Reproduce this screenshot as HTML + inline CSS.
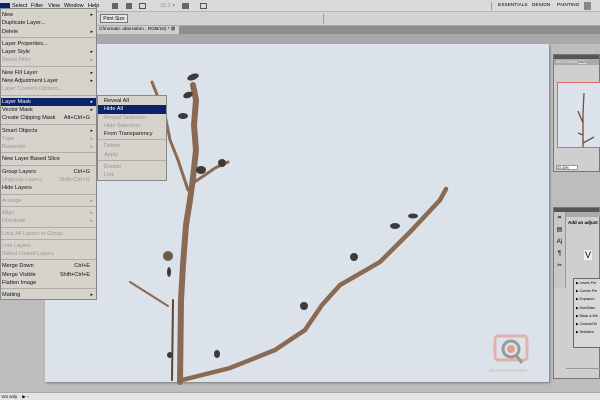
<!DOCTYPE html>
<html><head><style>
*{margin:0;padding:0;box-sizing:border-box}
body{width:600px;height:400px;overflow:hidden;background:#bdbdbd;font-family:"Liberation Sans",sans-serif;position:relative}
.abs{position:absolute}
.menu{left:0;top:8px;width:97px;height:292px;background:#d6d3cc;border:1px solid #888;font-size:5.6px;color:#111;padding-top:2px}
.menu div,.sub div{height:8.3px;line-height:8.3px;padding-left:1px;position:relative;white-space:nowrap}
.menu div.sep,.sub div.sep{height:4px;border-top:1px solid #b0ada6;margin-top:1px;line-height:0;height:3px}
.dis{color:#9a9893}
.sel{background:#0a246a;color:#fff}
.ar::after{content:"▸";position:absolute;right:3px;font-size:5px}
.sc{position:absolute;right:6px}
.sub{left:97px;top:95px;width:70px;height:86px;background:#d6d3cc;border:1px solid #888;font-size:5.6px;color:#111;padding-top:1px}
.sub div{padding-left:6px}
</style></head><body>
<div class="abs" style="left:0;top:0;width:600px;height:12px;background:#dadada;border-bottom:1px solid #b5b5b5;font-size:5.5px;line-height:12px">
<span class="abs" style="left:0;top:3px;width:10px;height:6px;background:#0a246a"></span>
<span class="abs" style="left:12px">Select</span><span class="abs" style="left:31px">Filter</span><span class="abs" style="left:48px">View</span><span class="abs" style="left:64px">Window</span><span class="abs" style="left:88px">Help</span>
<span class="abs" style="left:112px;top:3px;width:6px;height:6px;background:#666"></span>
<span class="abs" style="left:126px;top:3px;width:6px;height:6px;background:#666"></span>
<span class="abs" style="left:139px;top:3px;width:7px;height:6px;border:1px solid #555"></span>
<span class="abs" style="left:160px;color:#999">33.3 ▾</span>
<span class="abs" style="left:182px;top:3px;width:7px;height:6px;background:#666"></span>
<span class="abs" style="left:200px;top:3px;width:7px;height:6px;border:1px solid #555"></span>
<span class="abs" style="left:491px;top:2px;width:1px;height:8px;background:#999"></span>
<span class="abs" style="left:498px;font-size:4.8px">ESSENTIALS</span><span class="abs" style="left:532px;font-size:4.8px">DESIGN</span><span class="abs" style="left:557px;font-size:4.8px">PAINTING</span>
<span class="abs" style="left:584px;top:2px;width:7px;height:8px;background:#888"></span>
</div>
<div class="abs" style="left:0;top:12px;width:600px;height:14px;background:#d3d3d3;border-bottom:1px solid #aaa"></div>
<div class="abs" style="left:100px;top:14px;width:28px;height:9px;border:1px solid #777;background:#e6e6e6;font-size:5px;text-align:center;line-height:8px">Print Size</div>
<div class="abs" style="left:323px;top:14px;width:1px;height:10px;background:#999"></div>
<div class="abs" style="left:0;top:26px;width:600px;height:8px;background:#8e8e8e"></div>
<div class="abs" style="left:97px;top:26px;width:82px;height:8px;background:#cfcfcf;font-size:4.8px;line-height:8px;padding-left:2px">Chromatic aberration , RGB/16) * ⊠</div>
<div class="abs" style="left:0;top:34px;width:600px;height:10px;background:#a9a9a9"></div>
<div class="abs" style="left:45px;top:44px;width:504px;height:338px;background:#dce2ea;box-shadow:1px 1px 2px #777"></div>
<svg class="abs" style="left:0;top:0" width="600" height="400" viewBox="0 0 600 400">
<g stroke="#8a6a52" fill="none" stroke-linecap="round">
<path d="M180 382 L181 300 L183 265 L186 225 L190 200 L193 178 L196 150 L194 125 L196 100 L193 85" stroke-width="6"/>
<path d="M188 190 L178 160 L170 140 L165 115 L152 82" stroke-width="3"/>
<path d="M193 183 L205 175 L215 168 L228 162" stroke-width="3"/>
<path d="M182 380 L230 368 L275 350 L305 330 L322 305 L340 285 L380 262 L410 232 L440 200 L446 189" stroke-width="4.5"/>
<path d="M130 282 L168 306" stroke-width="2"/>
<path d="M173 300 L172 380" stroke-width="2" stroke="#5d4636"/>
</g>
<g fill="#3e3a3a">
<ellipse cx="193" cy="77" rx="6" ry="3" transform="rotate(-20 193 77)"/>
<ellipse cx="188" cy="95" rx="5" ry="3" transform="rotate(-20 188 95)"/>
<ellipse cx="183" cy="116" rx="5" ry="3"/>
<ellipse cx="201" cy="170" rx="5" ry="4"/>
<ellipse cx="222" cy="163" rx="4" ry="4"/>
<ellipse cx="168" cy="256" rx="5" ry="5" fill="#6b5a4c"/>
<ellipse cx="169" cy="272" rx="2" ry="5"/>
<ellipse cx="170" cy="355" rx="3" ry="3"/>
<ellipse cx="217" cy="354" rx="3" ry="4"/>
<ellipse cx="304" cy="306" rx="4" ry="4"/>
<ellipse cx="354" cy="257" rx="4" ry="4"/>
<ellipse cx="395" cy="226" rx="5" ry="3"/>
<ellipse cx="413" cy="216" rx="5" ry="2.5"/>
</g>
<rect x="495" y="336" width="32" height="24" rx="3" fill="none" stroke="#e0a090" stroke-width="3" opacity=".7"/>
<circle cx="511" cy="349" r="8" fill="none" stroke="#999" stroke-width="3"/>
<circle cx="511" cy="349" r="4" fill="#e0a090"/>
<line x1="516" y1="355" x2="522" y2="363" stroke="#999" stroke-width="3"/>
<text x="489" y="372" font-size="3.8" fill="#d4a8a0" font-family="Liberation Sans">SHUTTERSTOPPERS</text>
</svg>
<div class="abs" style="left:553px;top:54px;width:47px;height:118px;background:#cfcfcf;border:1px solid #777">
<div style="height:4px;background:#555"></div>
<div style="height:6px;background:#aaa;font-size:3.5px;color:#eee;padding-left:2px;line-height:6px">HISTOGRAM <span style="background:#ddd;color:#333">NAVI</span></div>
<div class="abs" style="left:3px;top:27px;width:44px;height:66px;border:1px solid #d66;background:#dde3ea">
<svg width="44" height="66"><path d="M25 64 L25 30 L26 10 M25 40 L20 28 M25 60 L36 54 M20 50 L25 52" stroke="#6d5040" stroke-width="1.3" fill="none"/></svg></div>
<div class="abs" style="left:2px;top:110px;width:22px;height:5px;background:#fff;font-size:3.5px;border:1px solid #999">33.33%</div>
</div>
<div class="abs" style="left:553px;top:207px;width:47px;height:172px;background:#cfcfcf;border:1px solid #777">
<div style="height:4px;background:#555"></div>
<div class="abs" style="left:0;top:4px;width:12px;height:76px;background:#c8c8c8;border-right:1px solid #999;font-size:6px;text-align:center;line-height:12px">⌗<br>▤<br>A|<br>¶<br>✂</div>
<div class="abs" style="left:12px;top:4px;width:35px;height:5px;background:#aaa"></div>
<div class="abs" style="left:14px;top:12px;font-size:4.5px;font-weight:bold">Add an adjust</div>
<div class="abs" style="left:30px;top:42px;font-size:9px;background:#eee;padding:0 1px">V</div>
<div class="abs" style="left:19px;top:70px;width:28px;height:70px;border:1px solid #666;background:#d8d8d8;font-size:3.5px;line-height:8.2px;padding-left:2px">
▶ Levels Pre<br>▶ Curves Pre<br>▶ Exposure<br>▶ Hue/Satur<br>▶ Black &amp; Wh<br>▶ Channel M<br>▶ Selective</div>
<div class="abs" style="left:12px;top:160px;width:35px;height:1px;background:#999"></div>
</div>
<div class="abs" style="left:0;top:392px;width:600px;height:8px;background:#e4e4e4;border-top:1px solid #aaa;font-size:4.5px;line-height:7px">&nbsp;Vot only &nbsp;&nbsp;&nbsp;▶ ▫</div>
<div class="abs menu">
<div class="ar">New</div><div>Duplicate Layer...</div><div class="ar">Delete</div>
<div class="sep"></div>
<div>Layer Properties...</div><div class="ar">Layer Style</div><div class="ar dis">Smart Filter</div>
<div class="sep"></div>
<div class="ar">New Fill Layer</div><div class="ar">New Adjustment Layer</div><div class="dis">Layer Content Options...</div>
<div class="sep"></div>
<div class="ar sel">Layer Mask</div><div class="ar">Vector Mask</div><div>Create Clipping Mask<span class="sc">Alt+Ctrl+G</span></div>
<div class="sep"></div>
<div class="ar">Smart Objects</div><div class="ar dis">Type</div><div class="ar dis">Rasterize</div>
<div class="sep"></div>
<div>New Layer Based Slice</div>
<div class="sep"></div>
<div>Group Layers<span class="sc">Ctrl+G</span></div><div class="dis">Ungroup Layers<span class="sc">Shift+Ctrl+G</span></div><div>Hide Layers</div>
<div class="sep"></div>
<div class="ar dis">Arrange</div>
<div class="sep"></div>
<div class="ar dis">Align</div><div class="ar dis">Distribute</div>
<div class="sep"></div>
<div class="dis">Lock All Layers in Group...</div>
<div class="sep"></div>
<div class="dis">Link Layers</div><div class="dis">Select Linked Layers</div>
<div class="sep"></div>
<div>Merge Down<span class="sc">Ctrl+E</span></div><div>Merge Visible<span class="sc">Shift+Ctrl+E</span></div><div>Flatten Image</div>
<div class="sep"></div>
<div class="ar">Matting</div>
</div>
<div class="abs sub">
<div>Reveal All</div><div class="sel">Hide All</div><div class="dis">Reveal Selection</div><div class="dis">Hide Selection</div><div>From Transparency</div>
<div class="sep"></div>
<div class="dis">Delete</div><div class="dis">Apply</div>
<div class="sep"></div>
<div class="dis">Enable</div><div class="dis">Link</div>
</div>
</body></html>
